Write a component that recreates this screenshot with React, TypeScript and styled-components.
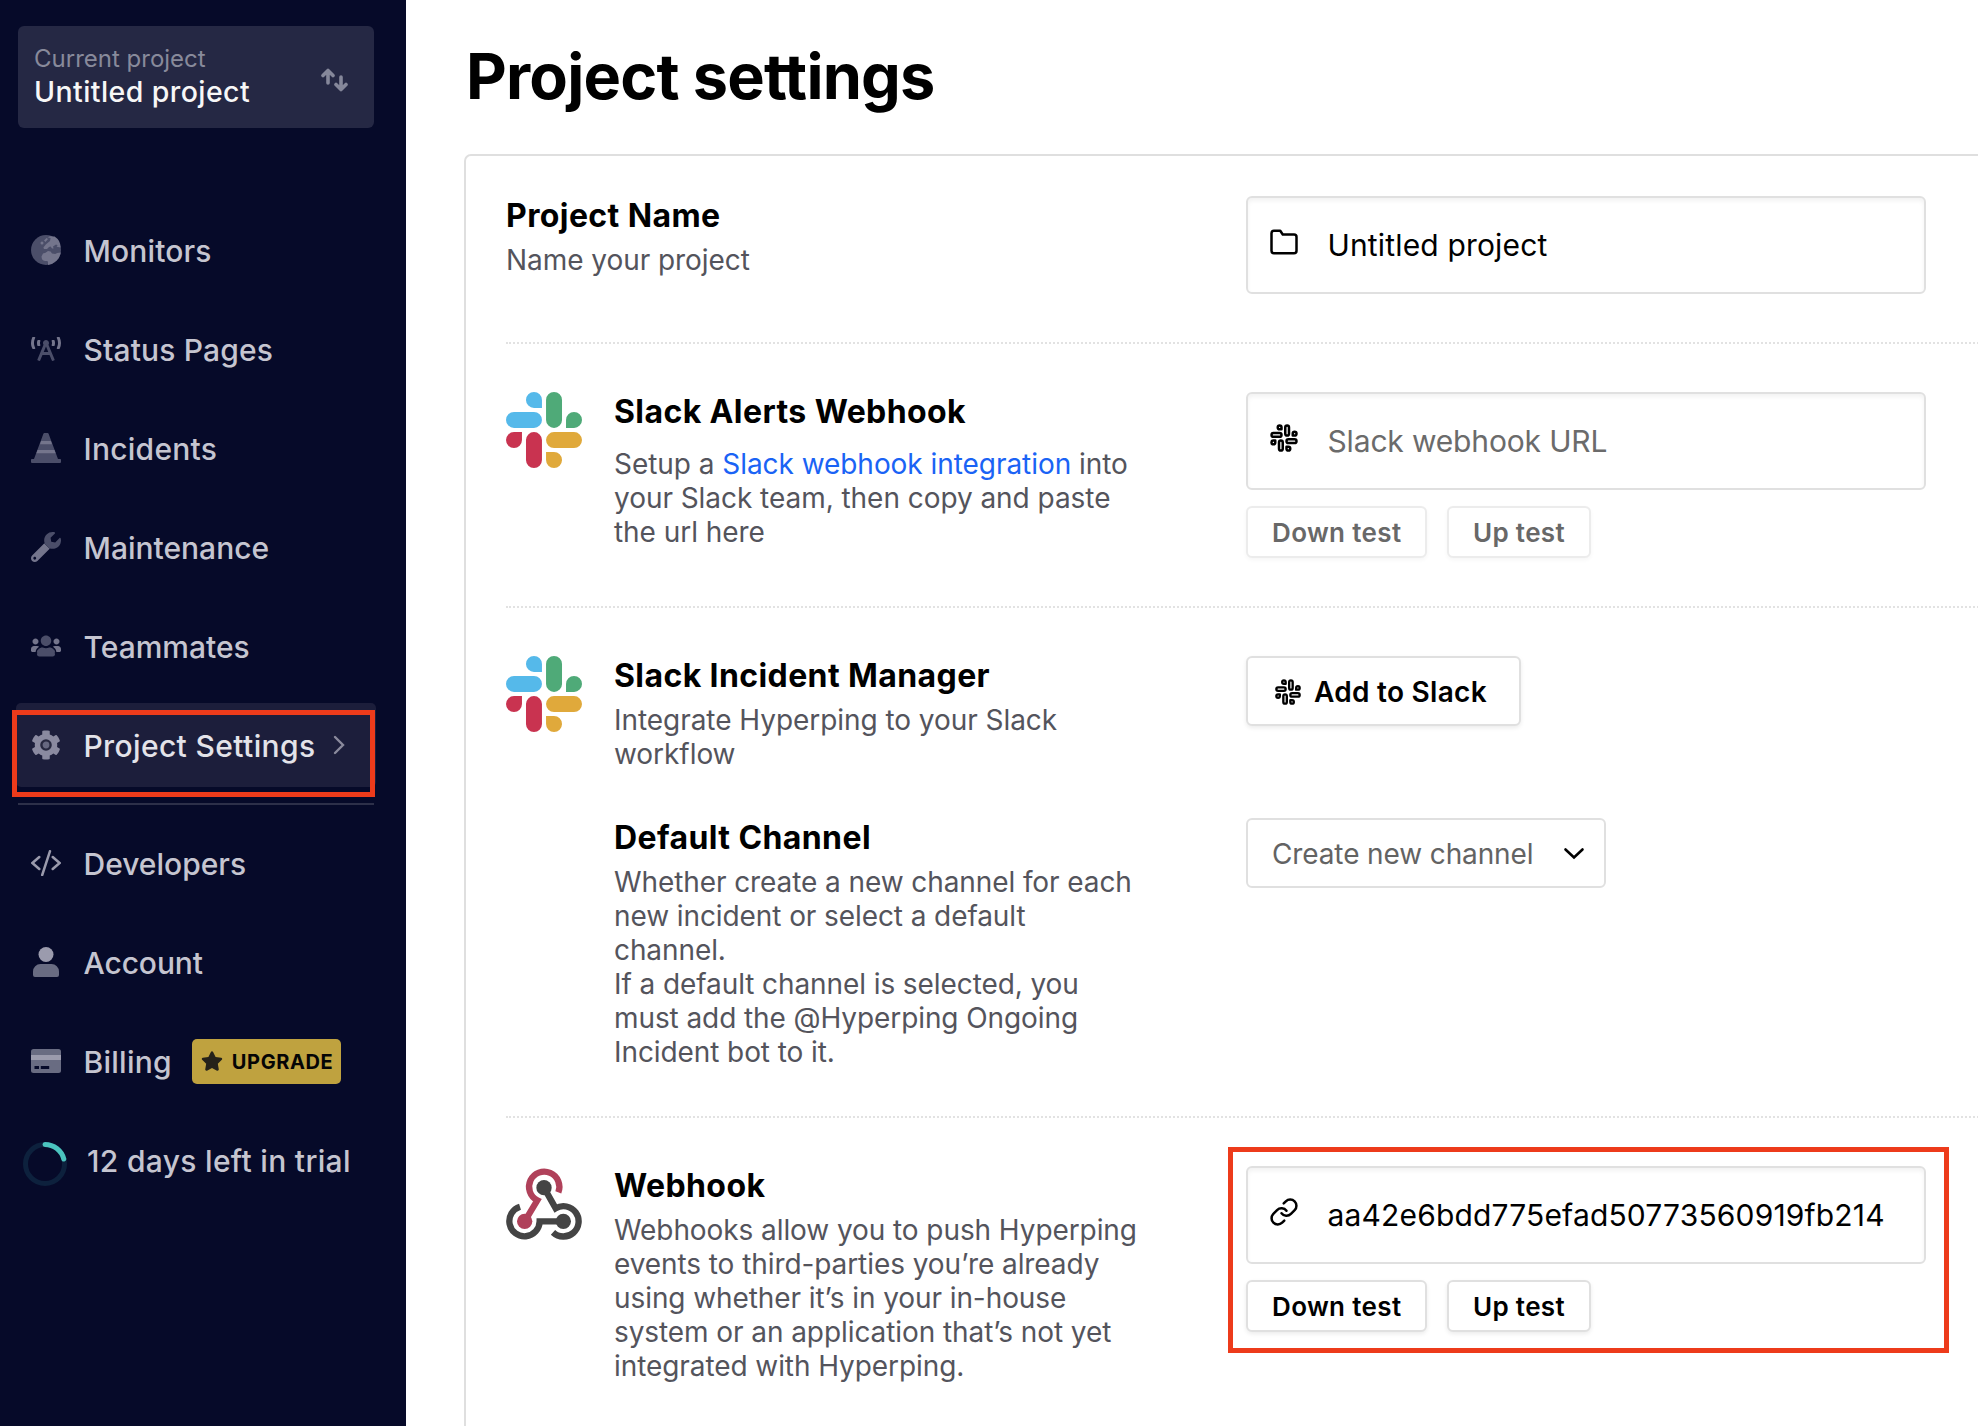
import React from 'react';
import styled, { createGlobalStyle, css } from 'styled-components';
import { FaBroadcastTower, FaWrench, FaUsers, FaCog, FaStar } from 'react-icons/fa';
import { FiFolder, FiLink, FiSlack } from 'react-icons/fi';

const GlobalStyle = createGlobalStyle`
  * { box-sizing: border-box; }
  html, body { margin: 0; padding: 0; background: #fff; }
  body {
    font-family: Inter, "Liberation Sans", sans-serif;
    color: #000;
    overflow: hidden;
  }
`;

const Page = styled.div`
  display: flex;
  width: 1978px;
  height: 1426px;
  overflow: hidden;
`;

/* ---------- sidebar ---------- */

const Sidebar = styled.aside`
  flex: none;
  width: 406px;
  padding: 26px 32px 0 18px;
  background: #060a29;
`;

const ProjectSwitch = styled.div`
  display: flex;
  justify-content: space-between;
  height: 102px;
  padding: 16px 26px 0 16px;
  border-radius: 6px;
  background: #252844;
`;

const SwitchCaption = styled.div`
  font-size: 24px;
  line-height: 33px;
  color: #888a9b;
`;

const SwitchName = styled.div`
  font-size: 28.5px;
  font-weight: 500;
  line-height: 34px;
  letter-spacing: 0.42px;
  color: #f7f7f7;
`;

const SwitchArrows = styled.svg`
  width: 28px;
  height: 24px;
  margin-top: 26px;
`;

const Nav = styled.nav`
  display: flex;
  flex-direction: column;
  gap: 15px;
  margin: 80px -2px 0;
`;

const NavItem = styled.a<{ $active?: boolean }>`
  position: relative;
  display: flex;
  align-items: center;
  height: 84px;
  padding-left: 15px;
  border-radius: 5px;
  color: #c5c5d0;
  ${(p) => p.$active && css`
    background: #1c1e3b;
    color: #e3e3e9;
  `}
`;

const NavIcon = styled.span`
  display: flex;
  justify-content: center;
  width: 30px;
  margin-right: 22.5px;
`;

const NavLabel = styled.span<{ $tracking?: number }>`
  padding-top: 2px;
  font-size: 30px;
  font-weight: 500;
  line-height: 36px;
  letter-spacing: ${(p) => p.$tracking ?? 0.15}px;
`;

const NavChevron = styled.svg`
  width: 12px;
  height: 20px;
  margin-left: 18px;
`;

const NavHighlight = styled.span`
  position: absolute;
  inset: 7px 1px -10px -4px;
  border: 5px solid #ed3b1b;
`;

const Divider = styled.hr`
  width: 356px;
  height: 2px;
  margin: 1px auto 1px;
  border: 0;
  background: #2d3049;
`;

const UpgradeBadge = styled.span`
  display: flex;
  align-items: center;
  gap: 9px;
  width: 149px;
  height: 45px;
  margin-left: 20px;
  padding: 1px 0 0 9px;
  border-radius: 5px;
  background: #bfa23f;
  color: #050505;
  font-size: 20px;
  font-weight: 700;
  letter-spacing: 0.6px;
  svg { margin-top: -2px; }
`;

const TrialRow = styled(NavItem)`
  padding-left: 7px;
`;

const TrialRing = styled.svg`
  width: 44px;
  height: 44px;
  margin: 8px 20px 0 0;
`;

/* ---------- icons ---------- */

const Layers = styled.span<{ $w: number; $h: number }>`
  position: relative;
  display: block;
  width: ${(p) => p.$w}px;
  height: ${(p) => p.$h}px;
  svg { position: absolute; inset: 0; width: 100%; height: 100%; }
`;

const Clip = styled.span<{ $path: string; $color: string }>`
  position: absolute;
  inset: 0;
  color: ${(p) => p.$color};
  clip-path: ${(p) => p.$path};
`;

const DIM = '#4b4e69';
const SOFT = '#74758c';

const GlobeIcon = () => (
  <svg width="30" height="30" viewBox="0 0 30 30">
    <circle cx="15" cy="15" r="15" fill={DIM} />
    <g fill={SOFT}>
      <path d="M10.500 21.500 12 18.400 14.500 17.800 17 16l2.600.4 1.400 2 3.200.6 2-1 3.600-.6A15 15 0 0 1 17 29.900V27.200q0-1.200-1.200-1.200H14q-3.500-.4-3.500-4.500z" />
      <path d="M21.500 1.500q-3.500-.6-4.500 1l2.600.6-.6 3-4 3.200-2.600 3.200.6 1.500h3l2-2 1.600-.4 1.400 2h1.600l-.6-2.200 3-1.800 1.600.6-1 1.600 4 .6q.2-7-6-11z" />
      <circle cx="11" cy="8" r="1.500" />
      <path d="M13 5.500l2.500-2.500 1.500 1-2.500 3z" />
    </g>
  </svg>
);

const TowerIcon = () => (
  <Layers $w={30} $h={24}>
    <Clip $path="polygon(0 0, 33% 0, 33% 50%, 0 50%)" $color={SOFT}><FaBroadcastTower /></Clip>
    <Clip $path="polygon(67% 0, 100% 0, 100% 50%, 67% 50%)" $color={SOFT}><FaBroadcastTower /></Clip>
    <Clip $path="polygon(33% 0, 67% 0, 67% 50%, 100% 50%, 100% 100%, 0 100%, 0 50%, 33% 50%)" $color={DIM}><FaBroadcastTower /></Clip>
  </Layers>
);

const ConeIcon = () => (
  <svg width="30" height="30" viewBox="0 0 30 30">
    <path d="M13.400 0h3.200q.7 0 1 .7L27 26h2.200q.8 0 .8.8V29q0 1-1 1H1q-1 0-1-1v-2.200q0-.8.8-.8H3L12.400.7q.3-.7 1-.7z" fill={DIM} />
    <path d="M10.100 8h9.800l1.100 3.200H9zM6.500 17h17l1.100 3.200H5.400z" fill={SOFT} />
  </svg>
);

const WrenchIcon = () => (
  <Layers $w={30} $h={30}>
    <Clip $path="polygon(0 0, 42% 0, 42% 36%, 63% 57%, 100% 60%, 100% 100%, 0 100%)" $color={SOFT}><FaWrench /></Clip>
    <Clip $path="polygon(42% 0, 100% 0, 100% 60%, 63% 57%, 42% 36%)" $color={DIM}><FaWrench /></Clip>
  </Layers>
);

const TeamIcon = () => (
  <Layers $w={30} $h={24}>
    <Clip $path="polygon(0 0, 28% 0, 28% 46%, 17% 100%, 0 100%)" $color={SOFT}><FaUsers /></Clip>
    <Clip $path="polygon(100% 0, 72% 0, 72% 46%, 83% 100%, 100% 100%)" $color={SOFT}><FaUsers /></Clip>
    <Clip $path="polygon(28% 0, 72% 0, 72% 46%, 83% 100%, 17% 100%, 28% 46%)" $color={DIM}><FaUsers /></Clip>
  </Layers>
);

const GearIcon = () => (
  <Layers $w={30} $h={30}>
    <Clip $path="none" $color="#8a8aa0"><FaCog /></Clip>
    <svg viewBox="0 0 30 30"><circle cx="15" cy="15" r="4.600" fill="#666880" stroke="#26283f" strokeWidth="2.400" /></svg>
  </Layers>
);

const CodeIcon = () => (
  <svg width="30" height="26" viewBox="0 0 30 26" fill="none" stroke="#9a9aac" strokeWidth="2.500" strokeLinecap="round">
    <path d="M8.300 7 1.400 13l6.900 6M21.700 7l6.900 6-6.900 6" />
    <path d="M19 1.200 11.200 25" />
  </svg>
);

const PersonIcon = () => (
  <svg width="26" height="30" viewBox="0 0 26 30">
    <circle cx="13" cy="7.500" r="7.500" fill="#9b9bad" />
    <path d="M7.500 17h11a7.500 7.500 0 0 1 7.500 7.500V28a2 2 0 0 1-2 2H2a2 2 0 0 1-2-2v-3.500A7.500 7.500 0 0 1 7.500 17z" fill="#696c82" />
  </svg>
);

const CardIcon = () => (
  <svg width="30" height="24" viewBox="0 0 30 24">
    <rect width="30" height="24" rx="2.500" fill="#696c82" />
    <rect y="6" width="30" height="5" fill="#9b9bad" />
    <path d="M3.500 17h4.500v3H3.500zM9.800 17h8.400v3H9.800z" fill="#060a29" />
  </svg>
);

const RowLogo = styled.svg`
  flex: none;
  width: 76px;
  height: 76px;
  margin-right: 32px;
`;

const SlackLogo = () => (
  <RowLogo viewBox="0 0 24 24">
    <path fill="#c93350" d="M5.042 15.165a2.528 2.528 0 0 1-2.520 2.523A2.528 2.528 0 0 1 0 15.165a2.527 2.527 0 0 1 2.522-2.520h2.520v2.520zM6.313 15.165a2.527 2.527 0 0 1 2.521-2.520 2.527 2.527 0 0 1 2.521 2.520v6.313A2.528 2.528 0 0 1 8.834 24a2.528 2.528 0 0 1-2.521-2.522v-6.313z" />
    <path fill="#55b9ea" d="M8.834 5.042a2.528 2.528 0 0 1-2.521-2.520A2.528 2.528 0 0 1 8.834 0a2.528 2.528 0 0 1 2.521 2.522v2.520H8.834zM8.834 6.313a2.528 2.528 0 0 1 2.521 2.521 2.528 2.528 0 0 1-2.521 2.521H2.522A2.528 2.528 0 0 1 0 8.834a2.528 2.528 0 0 1 2.522-2.521h6.312z" />
    <path fill="#4faa78" d="M18.956 8.834a2.528 2.528 0 0 1 2.522-2.521A2.528 2.528 0 0 1 24 8.834a2.528 2.528 0 0 1-2.522 2.521h-2.522V8.834zM17.688 8.834a2.528 2.528 0 0 1-2.523 2.521 2.527 2.527 0 0 1-2.520-2.521V2.522A2.527 2.527 0 0 1 15.165 0a2.528 2.528 0 0 1 2.523 2.522v6.312z" />
    <path fill="#e0a93b" d="M15.165 18.956a2.528 2.528 0 0 1 2.523 2.522A2.528 2.528 0 0 1 15.165 24a2.527 2.527 0 0 1-2.520-2.522v-2.522h2.520zM15.165 17.688a2.527 2.527 0 0 1-2.520-2.523 2.526 2.526 0 0 1 2.520-2.520h6.313A2.527 2.527 0 0 1 24 15.165a2.528 2.528 0 0 1-2.522 2.523h-6.313z" />
  </RowLogo>
);

const WebhookLogo = () => (
  <RowLogo viewBox="30 31 228 228" fill="none" strokeWidth="19">
    <path stroke="#444" d="M72 153A45.500 45.500 0 1 0 131 197H202" />
    <path stroke="#444" d="M144 96 179 158A45.500 45.500 0 1 1 171 230" />
    <path stroke="#b0415a" d="M187 110A45.500 45.500 0 1 0 124 134L86 197" />
    <circle cx="144" cy="96" r="23" fill="#444" />
    <circle cx="202" cy="197" r="23" fill="#444" />
    <circle cx="86" cy="197" r="23" fill="#b0415a" />
  </RowLogo>
);

/* ---------- main ---------- */

const Main = styled.main`
  flex: 1;
  min-width: 0;
  padding: 40px 0 0 58px;
  background: #fff;
`;

const PageTitle = styled.h1`
  margin: 0 0 42px 2px;
  font-size: 63px;
  font-weight: 700;
  line-height: 72px;
  letter-spacing: -0.8px;
`;

const Card = styled.div`
  width: 1600px;
  height: 1400px;
  padding: 0 40px;
  border: 2px solid #dfdfdf;
  border-radius: 7px;
`;

const Section = styled.section<{ $height: number; $top?: number }>`
  display: flex;
  flex-direction: column;
  gap: 47px;
  height: ${(p) => p.$height}px;
  padding-top: ${(p) => p.$top ?? 48}px;
  border-bottom: 2px dotted #e2e2e2;
`;

const Row = styled.div`
  display: grid;
  grid-template-columns: 740px 680px;
`;

const Info = styled.div<{ $indent?: boolean }>`
  display: flex;
  align-items: flex-start;
  padding-left: ${(p) => (p.$indent ? 108 : 0)}px;
`;

const InfoText = styled.div`
  width: 525px;
`;

const RowTitle = styled.h2`
  margin: 0;
  font-size: 32px;
  font-weight: 700;
  line-height: 40px;
  letter-spacing: 0.4px;
  white-space: nowrap;
`;

const Description = styled.p<{ $gap?: number; $tracking?: number }>`
  margin: ${(p) => p.$gap ?? 7}px 0 0;
  font-size: 28px;
  line-height: 34px;
  letter-spacing: ${(p) => p.$tracking ?? -0.05}px;
  color: #54545c;
`;

const Link = styled.a`
  color: #1a63f5;
`;

const Field = styled.div`
  display: flex;
  align-items: center;
  height: 98px;
  padding: 0 22px;
  border: 2px solid #e0e0e0;
  border-radius: 6px;
  box-shadow: inset 0 3px 4px rgba(0, 0, 0, 0.05);
  svg { flex: none; margin: -6px 28.5px 0 -1px; }
`;

const FieldValue = styled.span<{ $placeholder?: boolean }>`
  font-size: 30px;
  line-height: 36px;
  letter-spacing: ${(p) => (p.$placeholder ? -0.16 : 0.16)}px;
  white-space: nowrap;
  color: ${(p) => (p.$placeholder ? '#6b6b6b' : '#000')};
`;

const Buttons = styled.div`
  display: flex;
  gap: 20px;
  margin-top: 16px;
`;

const TestButton = styled.button<{ $faded?: boolean }>`
  height: 52px;
  padding: 2px 23.5px 0 24px;
  border: 2px solid ${(p) => (p.$faded ? '#ececec' : '#e0e0e0')};
  border-radius: 6px;
  background: #fff;
  box-shadow: 0 2px 4px rgba(0, 0, 0, ${(p) => (p.$faded ? 0.04 : 0.08)});
  color: ${(p) => (p.$faded ? '#686868' : '#000')};
  font: 600 26px/40px Inter, "Liberation Sans", sans-serif;
  letter-spacing: 0.35px;
`;

const SlackButton = styled.button`
  display: flex;
  align-items: center;
  gap: 12px;
  width: 275px;
  height: 70px;
  padding: 2px 0 0 26px;
  border: 2px solid #e0e0e0;
  border-radius: 6px;
  background: #fff;
  box-shadow: 0 2px 4px rgba(0, 0, 0, 0.08);
  color: #000;
  font: 600 28px/36px Inter, "Liberation Sans", sans-serif;
  letter-spacing: 0.28px;
`;

const Select = styled.div`
  display: flex;
  align-items: center;
  justify-content: space-between;
  width: 360px;
  height: 70px;
  padding: 2px 19px 0 24px;
  border: 2px solid #e0e0e0;
  border-radius: 6px;
  color: #636363;
  font-size: 28px;
  letter-spacing: -0.12px;
  svg { margin-top: -1px; }
`;

const WebhookArea = styled.div`
  position: relative;
`;

const WebhookHighlight = styled.span`
  position: absolute;
  inset: -19px -23px -21px -18px;
  border: 5px solid #ed3b1b;
`;

export default function App() {
  return (
    <>
      <GlobalStyle />
      <Page>
        <Sidebar>
          <ProjectSwitch>
            <div>
              <SwitchCaption>Current project</SwitchCaption>
              <SwitchName>Untitled project</SwitchName>
            </div>
            <SwitchArrows viewBox="0 0 28 24" fill="none" stroke="#85879a" strokeWidth="3.600" strokeLinecap="round" strokeLinejoin="round">
              <path d="M8 15V2.500M3 7.500l5-5 5 5M21 9v12.500M16 16.500l5 5 5-5" />
            </SwitchArrows>
          </ProjectSwitch>
          <Nav>
            <NavItem><NavIcon><GlobeIcon /></NavIcon><NavLabel>Monitors</NavLabel></NavItem>
            <NavItem><NavIcon><TowerIcon /></NavIcon><NavLabel>Status Pages</NavLabel></NavItem>
            <NavItem><NavIcon><ConeIcon /></NavIcon><NavLabel $tracking={0.25}>Incidents</NavLabel></NavItem>
            <NavItem><NavIcon><WrenchIcon /></NavIcon><NavLabel $tracking={0}>Maintenance</NavLabel></NavItem>
            <NavItem><NavIcon><TeamIcon /></NavIcon><NavLabel $tracking={0}>Teammates</NavLabel></NavItem>
            <NavItem $active>
              <NavIcon><GearIcon /></NavIcon>
              <NavLabel $tracking={0.37}>Project Settings</NavLabel>
              <NavChevron viewBox="0 0 12 20" fill="none" stroke="#8a8a9c" strokeWidth="2.400" strokeLinecap="round">
                <path d="M2 2l8 8-8 8" />
              </NavChevron>
              <NavHighlight />
            </NavItem>
            <Divider />
            <NavItem><NavIcon><CodeIcon /></NavIcon><NavLabel $tracking={0}>Developers</NavLabel></NavItem>
            <NavItem><NavIcon><PersonIcon /></NavIcon><NavLabel $tracking={-0.1}>Account</NavLabel></NavItem>
            <NavItem>
              <NavIcon><CardIcon /></NavIcon>
              <NavLabel $tracking={0.25}>Billing</NavLabel>
              <UpgradeBadge><FaStar size={22} color="#25221a" />UPGRADE</UpgradeBadge>
            </NavItem>
            <TrialRow>
              <TrialRing viewBox="0 0 44 44" fill="none" strokeWidth="5">
                <circle cx="22" cy="22" r="19.500" stroke="#0d213d" />
                <path d="M22 2.500A19.500 19.500 0 0 1 40.800 17" stroke="#4bc4bf" strokeLinecap="round" />
              </TrialRing>
              <NavLabel $tracking={0.32}>12 days left in trial</NavLabel>
            </TrialRow>
          </Nav>
        </Sidebar>

        <Main>
          <PageTitle>Project settings</PageTitle>
          <Card>
            <Section $height={188} $top={40}>
              <Row>
                <Info>
                  <InfoText>
                    <RowTitle>Project Name</RowTitle>
                    <Description>Name your project</Description>
                  </InfoText>
                </Info>
                <Field><FiFolder size={30} /><FieldValue>Untitled project</FieldValue></Field>
              </Row>
            </Section>

            <Section $height={264}>
              <Row>
                <Info>
                  <SlackLogo />
                  <InfoText>
                    <RowTitle>Slack Alerts Webhook</RowTitle>
                    <Description $gap={15}>
                      Setup a <Link>Slack webhook integration</Link> into your Slack team, then copy and paste the url here
                    </Description>
                  </InfoText>
                </Info>
                <div>
                  <Field><FiSlack size={30} /><FieldValue $placeholder>Slack webhook URL</FieldValue></Field>
                  <Buttons>
                    <TestButton $faded>Down test</TestButton>
                    <TestButton $faded>Up test</TestButton>
                  </Buttons>
                </div>
              </Row>
            </Section>

            <Section $height={510}>
              <Row>
                <Info>
                  <SlackLogo />
                  <InfoText>
                    <RowTitle>Slack Incident Manager</RowTitle>
                    <Description>Integrate Hyperping to your Slack workflow</Description>
                  </InfoText>
                </Info>
                <SlackButton><FiSlack size={28} />Add to Slack</SlackButton>
              </Row>
              <Row>
                <Info $indent>
                  <InfoText>
                    <RowTitle>Default Channel</RowTitle>
                    <Description $tracking={-0.09}>
                      Whether create a new channel for each new incident or select a default channel.
                      <br />
                      If a default channel is selected, you must add the @Hyperping Ongoing Incident bot to it.
                    </Description>
                  </InfoText>
                </Info>
                <Select>
                  Create new channel
                  <svg width="22" height="14" viewBox="0 0 22 14" fill="none" stroke="#000" strokeWidth="2.600" strokeLinecap="round">
                    <path d="M2.500 2.500 11 10.500l8.500-8" />
                  </svg>
                </Select>
              </Row>
            </Section>

            <Section $height={400}>
              <Row>
                <Info>
                  <WebhookLogo />
                  <InfoText>
                    <RowTitle>Webhook</RowTitle>
                    <Description $tracking={-0.08}>
                      Webhooks allow you to push Hyperping events to third-parties you’re already using whether it’s in your
                      in-house system or an application that’s not yet integrated with Hyperping.
                    </Description>
                  </InfoText>
                </Info>
                <div>
                  <WebhookArea>
                    <Field><FiLink size={30} /><FieldValue>aa42e6bdd775efad50773560919fb214</FieldValue></Field>
                    <Buttons>
                      <TestButton>Down test</TestButton>
                      <TestButton>Up test</TestButton>
                    </Buttons>
                    <WebhookHighlight />
                  </WebhookArea>
                </div>
              </Row>
            </Section>
          </Card>
        </Main>
      </Page>
    </>
  );
}
